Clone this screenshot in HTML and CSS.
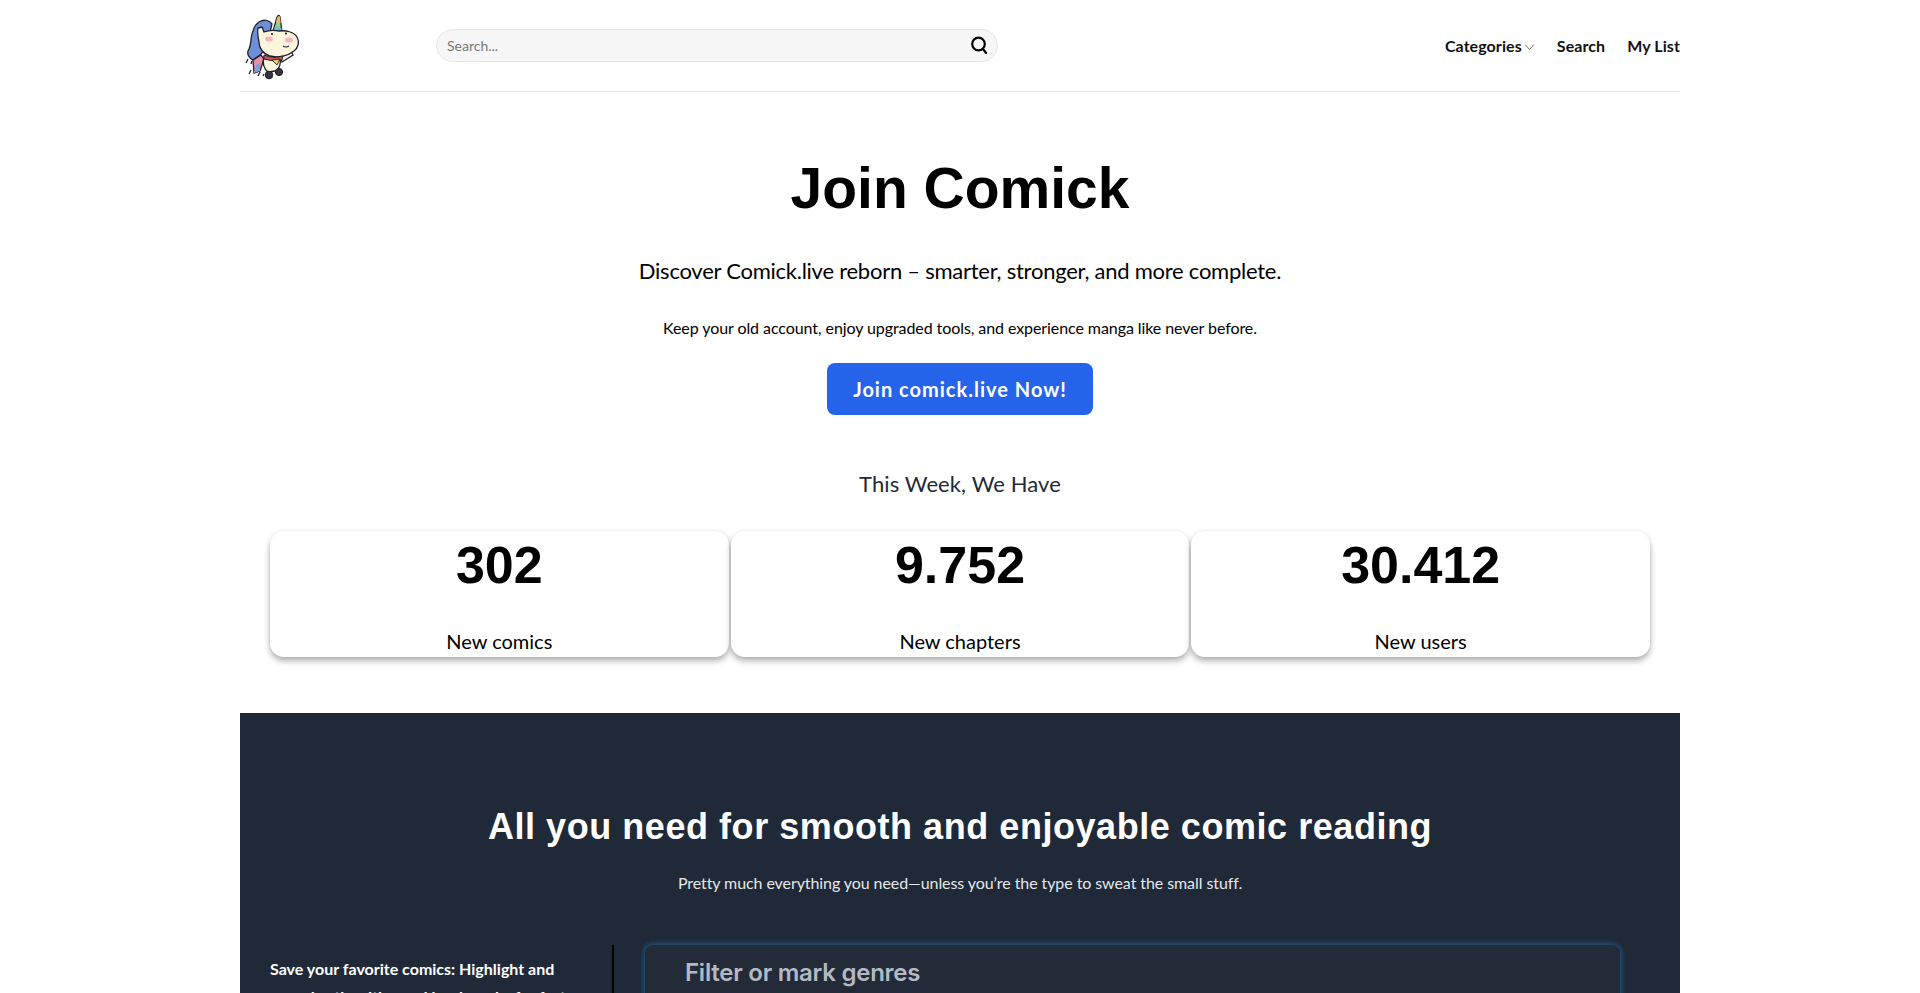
FILE: index.html
```html
<!DOCTYPE html>
<html lang="en">
<head>
    <meta charset="UTF-8">
    <meta name="viewport" content="width=device-width, initial-scale=1.0">
    <title>Join Comick</title>
    <link rel="stylesheet" href="styles.css">
</head>
<body>
    <div class="container">
        <!-- Header -->
        <header class="header">
            <a class="logo" href="#">
                <svg width="74" height="74" viewBox="4 0 74 74">
                    <path d="M23 13 C28 10 33 11 36 15 L30 40 L24 46 L17 51 C13 49 11 45 12 42 C16 36 14 28 17 22 C18 18 20 15 23 13 Z" fill="#6f8ed8" stroke="#20202c" stroke-width="1.3"/>
                    <path d="M17 51 L25 46 L28 50 L24 62 L18 64 Z" fill="#e690a6" stroke="#20202c" stroke-width="1.3"/>
                    <path d="M20 56 L24 54 L24 62 L18 64 Z" fill="#7fa0dc"/>
                    <path d="M28 48 L44 49 C45 54 44 60 39 62 L32 63 C28 60 26 54 28 48 Z" fill="#fdf6dc" stroke="#20202c" stroke-width="1.3"/>
                    <path d="M44 47 L55 42 L57 46 L46 53 Z" fill="#fdf6dc" stroke="#20202c" stroke-width="1.3"/>
                    <path d="M37 22 L41 8 Q43 5 44 8 L46 23 Z" fill="#8fd08a" stroke="#20202c" stroke-width="1.3"/>
                    <path d="M41.5 8 Q43 6 44 8 L44.8 14 L40 13 Z" fill="#f2b45c"/>
                    <path d="M38.5 18 L45.4 19 L45.8 22.5 L37.6 21.5 Z" fill="#6fb6d8"/>
                    <path d="M22 19 L26 18 L28 23 C33 21 38 21 43 22 C50 21 58 23 61 28 C64 33 62 39 58 42 C52 47 42 49 34 47 C27 45 23 39 23 33 C22 28 21 23 22 19 Z" fill="#fdf6dc" stroke="#20202c" stroke-width="1.3"/>
                    <ellipse cx="33" cy="30" rx="4" ry="2.5" fill="#f3b4bc"/>
                    <ellipse cx="53" cy="31" rx="4" ry="2.5" fill="#f3b4bc"/>
                    <circle cx="36" cy="25" r="1.1" fill="#20202c"/>
                    <circle cx="50" cy="24.5" r="1.1" fill="#20202c"/>
                    <path d="M47 37 q3 2 6 0" stroke="#20202c" stroke-width="1.2" fill="none"/>
                    <path d="M28 46 Q37 50 47 47 L46 51 Q36 53 28 50 Z" fill="#c9545e" stroke="#20202c" stroke-width="1"/>
                    <path d="M36 51 L44 50 L41 56 Z" fill="#f4cf5a" stroke="#20202c" stroke-width="0.9"/>
                    <circle cx="33" cy="66" r="3.8" fill="#34343e" stroke="#20202c"/>
                    <circle cx="43" cy="63" r="3.6" fill="#34343e" stroke="#20202c"/>
                    <path d="M12 50 L10 54 M16 52 L15 55 M15 61 L13 65 M24 63 L22 67 M28 65 L27 67" stroke="#20202c" stroke-width="1.3"/>
                </svg>
            </a>
            <form class="search-box">
                <input class="search-input" type="text" placeholder="Search...">
                <svg class="search-icon" width="20" height="20" viewBox="0 0 20 20" fill="none" stroke="#000" stroke-width="2.2" stroke-linecap="round">
                    <circle cx="9.5" cy="9" r="6.3"/>
                    <path d="M13.9 13.8 L17.1 18"/>
                </svg>
            </form>
            <nav class="nav">
                <a class="nav-link" href="#">Categories<svg class="chevron" width="11" height="10" viewBox="0 0 11 10" fill="none" stroke="#555" stroke-width="0.8"><path d="M1 2.5 L5.5 7.5 L10 2.5"/></svg></a>
                <a class="nav-link" href="#">Search</a>
                <a class="nav-link" href="#">My List</a>
            </nav>
        </header>

        <!-- Hero -->
        <section class="hero">
            <h1 class="hero-title">Join Comick</h1>
            <p class="hero-lead">Discover Comick.live reborn – smarter, stronger, and more complete.</p>
            <p class="hero-text">Keep your old account, enjoy upgraded tools, and experience manga like never before.</p>
            <a class="join-btn" href="#">Join comick.live Now!</a>
            <h2 class="week-title">This Week, We Have</h2>
            <div class="stats">
                <div class="stat-card">
                    <div class="stat-num">302</div>
                    <div class="stat-label">New comics</div>
                </div>
                <div class="stat-card">
                    <div class="stat-num">9.752</div>
                    <div class="stat-label">New chapters</div>
                </div>
                <div class="stat-card">
                    <div class="stat-num">30.412</div>
                    <div class="stat-label">New users</div>
                </div>
            </div>
        </section>

        <!-- Features -->
        <section class="features">
            <h2 class="features-title">All you need for smooth and enjoyable comic reading</h2>
            <p class="features-text">Pretty much everything you need—unless you’re the type to sweat the small stuff.</p>
            <div class="features-body">
                <div class="features-list">
                    <p class="feature-item">Save your favorite comics: Highlight and organize the titles and bookmarks for fast</p>
                </div>
                <div class="features-shot">
                    <div class="shot-title">Filter or mark genres</div>
                </div>
            </div>
        </section>
    </div>
</body>
</html>
```

FILE: styles.css
```css
html, body {
    height: 993px;
    overflow: hidden;
}
body {
    margin: 0;
    background-color: #fff;
    color: #000;
    font-family: "Lato", sans-serif;
}
a {
    color: inherit;
    text-decoration: none;
}
.container {
    width: 1440px;
    margin: 0 auto;
}
.header {
    display: flex;
    align-items: center;
    height: 91px;
    border-bottom: 1px solid #e5e7eb;
}
.logo {
    display: flex;
    width: 196px;
}
.search-box {
    display: flex;
    align-items: center;
    width: 562px;
    height: 33px;
    margin: 0;
    padding: 0 8px 0 10px;
    box-sizing: border-box;
    background-color: #f6f6f6;
    border: 1px solid #e5e7eb;
    border-radius: 17px;
}
.search-input {
    flex: 1;
    border: none;
    background: none;
    outline: none;
    padding: 0;
    font-family: "Lato", sans-serif;
    font-size: 14px;
    color: #333;
}
.search-input::placeholder {
    color: #777;
}
.search-icon {
    margin-bottom: 2px;
}
.nav {
    display: flex;
    gap: 22px;
    margin-left: auto;
}
.nav-link {
    font-size: 16px;
    font-weight: 700;
    letter-spacing: 0.08px;
    color: #111;
}
.chevron {
    margin-left: 2px;
}
.hero {
    display: flex;
    flex-direction: column;
    align-items: center;
    text-align: center;
    padding: 0 30px;
}
.hero-title {
    margin: 60px 0 0;
    font-family: "Liberation Sans", sans-serif;
    font-size: 57px;
    font-weight: 700;
    line-height: 72px;
}
.hero-lead {
    margin: 33px 0 0;
    font-size: 22px;
    letter-spacing: -0.25px;
    line-height: 28px;
}
.hero-text {
    margin: 31px 0 0;
    font-size: 16px;
    letter-spacing: -0.08px;
    line-height: 24px;
}
.join-btn {
    margin-top: 23px;
    padding: 0 26.5px;
    height: 52px;
    line-height: 52px;
    background-color: #2563eb;
    border-radius: 8px;
    color: #fff;
    font-size: 20px;
    font-weight: 700;
    letter-spacing: 1px;
}
.week-title {
    margin: 53px 0 0;
    font-size: 22px;
    font-weight: 400;
    letter-spacing: 0.1px;
    line-height: 32px;
    color: #1f2937;
}
.stats {
    display: grid;
    grid-template-columns: repeat(3, 1fr);
    gap: 2px;
    width: 100%;
    margin-top: 31px;
}
.stat-card {
    display: flex;
    flex-direction: column;
    align-items: center;
    justify-content: space-between;
    height: 126px;
    padding-top: 1px;
    padding-bottom: 4px;
    box-sizing: border-box;
    border-radius: 14px;
    background-color: #fff;
    box-shadow: 0 4px 6px rgba(0, 0, 0, 0.3), 0 0 4px rgba(0, 0, 0, 0.06);
}
.stat-num {
    font-family: "Liberation Sans", sans-serif;
    font-size: 52px;
    font-weight: 700;
    line-height: 66px;
}
.stat-label {
    font-size: 20px;
    line-height: 24px;
}
.features {
    margin-top: 56px;
    padding: 92px 30px 0;
    background-color: #1f2937;
    color: #fff;
    text-align: center;
    height: 500px;
    box-sizing: border-box;
}
.features-title {
    margin: 0;
    font-family: "Liberation Sans", sans-serif;
    font-size: 36px;
    font-weight: 700;
    letter-spacing: 0.55px;
    line-height: 44px;
}
.features-text {
    margin: 22px 0 0;
    font-size: 16px;
    letter-spacing: -0.08px;
    line-height: 24px;
    color: #e5e7eb;
}
.features-body {
    display: flex;
    margin-top: 50px;
    text-align: left;
}
.features-list {
    width: 344px;
    box-sizing: border-box;
    padding: 10px 6px 0 0;
    border-right: 2px solid #000;
}
.feature-item {
    margin: 0;
    font-size: 16px;
    font-weight: 700;
    line-height: 28px;
}
.features-shot {
    flex: none;
    width: 975px;
    box-sizing: border-box;
    margin-left: 31px;
    height: 300px;
    padding: 13px 40px;
    background-color: #232b39;
    border-radius: 8px;
    box-shadow: 0 0 4px 2px rgba(28, 88, 128, 0.85);
}
.shot-title {
    font-family: "Inter", sans-serif;
    font-size: 24px;
    font-weight: 600;
    letter-spacing: -0.25px;
    color: #b4bac4;
}
```
